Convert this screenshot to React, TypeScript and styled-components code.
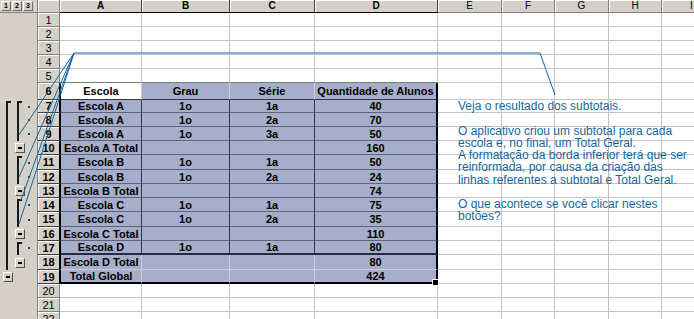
import React from 'react';
import styled, { createGlobalStyle } from 'styled-components';

const GlobalStyle = createGlobalStyle`
  html, body { margin: 0; padding: 0; background: #ffffff; overflow: hidden; }
  body { font-family: "Liberation Sans", Arial, sans-serif; }
`;

type Col = { key: string; w: number; sel: boolean };
const COLS: Col[] = [
  { key: 'A', w: 82, sel: true },
  { key: 'B', w: 88, sel: true },
  { key: 'C', w: 85, sel: true },
  { key: 'D', w: 123, sel: true },
  { key: 'E', w: 64, sel: false },
  { key: 'F', w: 53, sel: false },
  { key: 'G', w: 54, sel: false },
  { key: 'H', w: 53, sel: false },
  { key: 'I', w: 60, sel: false },
];

const HEIGHTS: Record<number, number> = {
  1: 14, 2: 14, 3: 14, 4: 14, 5: 14, 6: 17,
  7: 13, 8: 14, 9: 14, 10: 14, 11: 15, 12: 14, 13: 14, 14: 14, 15: 15,
  16: 14, 17: 14, 18: 15, 19: 14, 20: 14, 21: 14, 22: 14,
};

type L1 = 'none' | 'start' | 'mid' | 'btn';
type L2 = 'none' | 'start' | 'mid' | 'btn';
type RowData = { n: number; cells?: string[]; l1?: L1; l2?: L2; dot?: boolean };

const ROWS: RowData[] = [
  { n: 1 }, { n: 2 }, { n: 3 }, { n: 4 }, { n: 5 },
  { n: 6, cells: ['Escola', 'Grau', 'Série', 'Quantidade de Alunos'] },
  { n: 7, cells: ['Escola A', '1o', '1a', '40'], l1: 'start', l2: 'start', dot: true },
  { n: 8, cells: ['Escola A', '1o', '2a', '70'], l1: 'mid', l2: 'mid', dot: true },
  { n: 9, cells: ['Escola A', '1o', '3a', '50'], l1: 'mid', l2: 'mid', dot: true },
  { n: 10, cells: ['Escola A Total', '', '', '160'], l1: 'mid', l2: 'btn' },
  { n: 11, cells: ['Escola B', '1o', '1a', '50'], l1: 'mid', l2: 'start', dot: true },
  { n: 12, cells: ['Escola B', '1o', '2a', '24'], l1: 'mid', l2: 'mid', dot: true },
  { n: 13, cells: ['Escola B Total', '', '', '74'], l1: 'mid', l2: 'btn' },
  { n: 14, cells: ['Escola C', '1o', '1a', '75'], l1: 'mid', l2: 'start', dot: true },
  { n: 15, cells: ['Escola C', '1o', '2a', '35'], l1: 'mid', l2: 'mid', dot: true },
  { n: 16, cells: ['Escola C Total', '', '', '110'], l1: 'mid', l2: 'btn' },
  { n: 17, cells: ['Escola D', '1o', '1a', '80'], l1: 'mid', l2: 'start', dot: true },
  { n: 18, cells: ['Escola D Total', '', '', '80'], l1: 'mid', l2: 'btn' },
  { n: 19, cells: ['Total Global', '', '', '424'], l1: 'btn' },
  { n: 20 }, { n: 21 }, { n: 22 },
];

const GRID = '1px solid #c4c4c4';
const DARK = '1px solid #30354f';
const LIGHT = '1px solid #c9cddb';
const ROWLINE = '1px solid #5c6383';
const BLACK2 = '2px solid #000000';

const Sheet = styled.div`
  position: relative;
  width: 694px;
  height: 319px;
  overflow: hidden;
  background: #ffffff;
`;

const HeaderRow = styled.div`
  display: flex;
  height: 13px;
`;

const OutlineTop = styled.div`
  width: 38px;
  flex: none;
  box-sizing: border-box;
  background: #d4d0c8;
  border-right: 1px solid #808080;
  border-bottom: 1px solid #808080;
  display: flex;
  gap: 1px;
  padding: 1px 0 0 1px;
`;

const LevelBtn = styled.div`
  width: 10px;
  height: 10px;
  box-sizing: border-box;
  background: #d4d0c8;
  border: 1px solid;
  border-color: #ffffff #6b6b6b #6b6b6b #ffffff;
  font-size: 7px;
  font-weight: bold;
  line-height: 8px;
  text-align: center;
  color: #000;
`;

const Corner = styled.div`
  width: 22px;
  flex: none;
  box-sizing: border-box;
  background: #d4d0c8;
  border-right: 1px solid #808080;
  border-bottom: 1px solid #808080;
  box-shadow: inset 1px 1px 0 #ffffff;
`;

const ColHead = styled.div<{ $w: number; $sel: boolean }>`
  width: ${p => p.$w}px;
  flex: none;
  box-sizing: border-box;
  background: #d4d0c8;
  border-right: 1px solid ${p => (p.$sel ? '#404040' : '#808080')};
  border-bottom: 1px solid ${p => (p.$sel ? '#000000' : '#808080')};
  box-shadow: inset 1px 1px 0 #ffffff;
  font-size: 10px;
  line-height: 12px;
  font-weight: ${p => (p.$sel ? 'bold' : 'normal')};
  text-align: center;
  color: #000;
`;

const Row = styled.div<{ $h: number }>`
  display: flex;
  height: ${p => p.$h}px;
`;

const OutlineCell = styled.div`
  width: 38px;
  flex: none;
  box-sizing: border-box;
  background: #d4d0c8;
  border-right: 1px solid #808080;
  display: flex;
`;

const Slot = styled.div<{ $w: number }>`
  width: ${p => p.$w}px;
  flex: none;
  display: flex;
  align-items: stretch;
`;

const Bar = styled.div<{ $start: boolean; $offset: number }>`
  margin-left: ${p => p.$offset}px;
  margin-top: ${p => (p.$start ? 1 : 0)}px;
  width: 5px;
  box-sizing: border-box;
  border-left: 2px solid #1a1a1a;
  border-top: ${p => (p.$start ? '2px solid #1a1a1a' : 'none')};
`;

const MinusBtn = styled.div<{ $offset: number }>`
  margin-left: ${p => p.$offset}px;
  align-self: center;
  width: 10px;
  height: 10px;
  box-sizing: border-box;
  background: #d4d0c8;
  border: 1px solid;
  border-color: #ffffff #505050 #505050 #ffffff;
  display: flex;
  align-items: center;
  justify-content: center;
  &::after {
    content: '';
    width: 4px;
    height: 2px;
    background: #000000;
  }
`;

const Dot = styled.div`
  margin-left: 2px;
  align-self: center;
  width: 2px;
  height: 2px;
  background: #3a3a3a;
`;

const RowHead = styled.div<{ $sel: boolean }>`
  width: 22px;
  flex: none;
  box-sizing: border-box;
  background: #d4d0c8;
  border-right: 1px solid ${p => (p.$sel ? '#000000' : '#808080')};
  border-bottom: 1px solid ${p => (p.$sel ? '#404040' : '#808080')};
  box-shadow: inset 1px 1px 0 #ffffff;
  font-size: 11px;
  font-weight: ${p => (p.$sel ? 'bold' : 'normal')};
  color: #000;
  display: flex;
  align-items: center;
  justify-content: center;
`;

const Cell = styled.div<{ $w: number; $fill: string; $left: string; $right: string; $bottom: string }>`
  position: relative;
  width: ${p => p.$w}px;
  flex: none;
  box-sizing: border-box;
  background: ${p => p.$fill};
  border-left: ${p => p.$left};
  border-right: ${p => p.$right};
  border-bottom: ${p => p.$bottom};
  font-size: 11px;
  font-weight: bold;
  color: #000000;
  display: flex;
  align-items: center;
  justify-content: center;
  white-space: nowrap;
  overflow: visible;
`;

const FillHandle = styled.div`
  position: absolute;
  right: -3px;
  bottom: -4px;
  width: 5px;
  height: 5px;
  background: #000000;
  border: 1px solid #ffffff;
  z-index: 2;
`;

const Overlay = styled.svg`
  position: absolute;
  left: 0;
  top: 0;
  pointer-events: none;
`;

const Callout = styled.div`
  position: absolute;
  left: 458px;
  top: 100px;
  font-size: 12px;
  line-height: 12.25px;
  color: #14679f;
  white-space: nowrap;
`;

const Para = styled.p`
  margin: 0 0 12.25px 0;
`;

function cellStyle(r: number, c: number) {
  const inTable = r >= 6 && r <= 19 && c <= 3;
  let left = 'none';
  let right = GRID;
  let bottom = GRID;
  let fill = '#ffffff';
  if (inTable) {
    if (c === 0) left = '1px solid #000000';
    if (c === 3) right = BLACK2;
    else if (r >= 7 && r <= 17) right = DARK;
    else right = LIGHT;
    if (r === 19) bottom = BLACK2;
    else if (r === 17) bottom = '2px solid #262a42';
    else if (r === 6) bottom = DARK;
    else if (r === 18) bottom = LIGHT;
    else bottom = ROWLINE;
    fill = r === 6 && c === 0 ? '#ffffff' : '#a6aec9';
  } else if (r === 5 && c <= 3) {
    bottom = '1px solid #7a7a7a';
  }
  return { left, right, bottom, fill };
}

function Outline({ row }: { row: RowData }) {
  return (
    <OutlineCell>
      <Slot $w={13}>
        {(row.l1 === 'start' || row.l1 === 'mid') && <Bar $start={row.l1 === 'start'} $offset={6} />}
        {row.l1 === 'btn' && <MinusBtn $offset={3} />}
      </Slot>
      <Slot $w={13}>
        {(row.l2 === 'start' || row.l2 === 'mid') && <Bar $start={row.l2 === 'start'} $offset={4} />}
        {row.l2 === 'btn' && <MinusBtn $offset={2} />}
      </Slot>
      <Slot $w={11}>{row.dot && <Dot />}</Slot>
    </OutlineCell>
  );
}

const V = 74;
const VY = 53;
const TARGETS: [number, number][] = [
  [19, 135],
  [19, 177],
  [19, 224],
  [21, 200],
];

export default function App() {
  return (
    <>
      <GlobalStyle />
      <Sheet>
        <HeaderRow>
          <OutlineTop>
            <LevelBtn>1</LevelBtn>
            <LevelBtn>2</LevelBtn>
            <LevelBtn>3</LevelBtn>
          </OutlineTop>
          <Corner />
          {COLS.map(c => (
            <ColHead key={c.key} $w={c.w} $sel={c.sel}>{c.key}</ColHead>
          ))}
        </HeaderRow>
        {ROWS.map(row => (
          <Row key={row.n} $h={HEIGHTS[row.n]}>
            <Outline row={row} />
            <RowHead $sel={row.n >= 6 && row.n <= 19}>{row.n}</RowHead>
            {COLS.map((col, ci) => {
              const s = cellStyle(row.n, ci);
              return (
                <Cell key={col.key} $w={col.w} $fill={s.fill} $left={s.left} $right={s.right} $bottom={s.bottom}>
                  {row.cells && ci < 4 ? row.cells[ci] : ''}
                  {row.n === 19 && ci === 3 && <FillHandle />}
                </Cell>
              );
            })}
          </Row>
        ))}
        <Overlay width={694} height={319} viewBox="0 0 694 319">
          <polyline points={`${V},${VY} 540,${VY} 555,95`} fill="none" stroke="#15679f" strokeWidth={1} />
          {TARGETS.map(([x, y], i) => (
            <line key={i} x1={V} y1={VY} x2={x} y2={y} stroke="#15679f" strokeWidth={1} />
          ))}
        </Overlay>
        <Callout>
          <Para>Veja o resultado dos subtotais.</Para>
          <Para>
            O aplicativo criou um subtotal para cada<br />
            escola e, no final, um Total Geral.<br />
            A formatação da borda inferior terá que ser<br />
            reinformada, por causa da criação das<br />
            linhas referentes a subtotal e Total Geral.
          </Para>
          <Para>
            O que acontece se você clicar nestes<br />
            botões?
          </Para>
        </Callout>
      </Sheet>
    </>
  );
}
